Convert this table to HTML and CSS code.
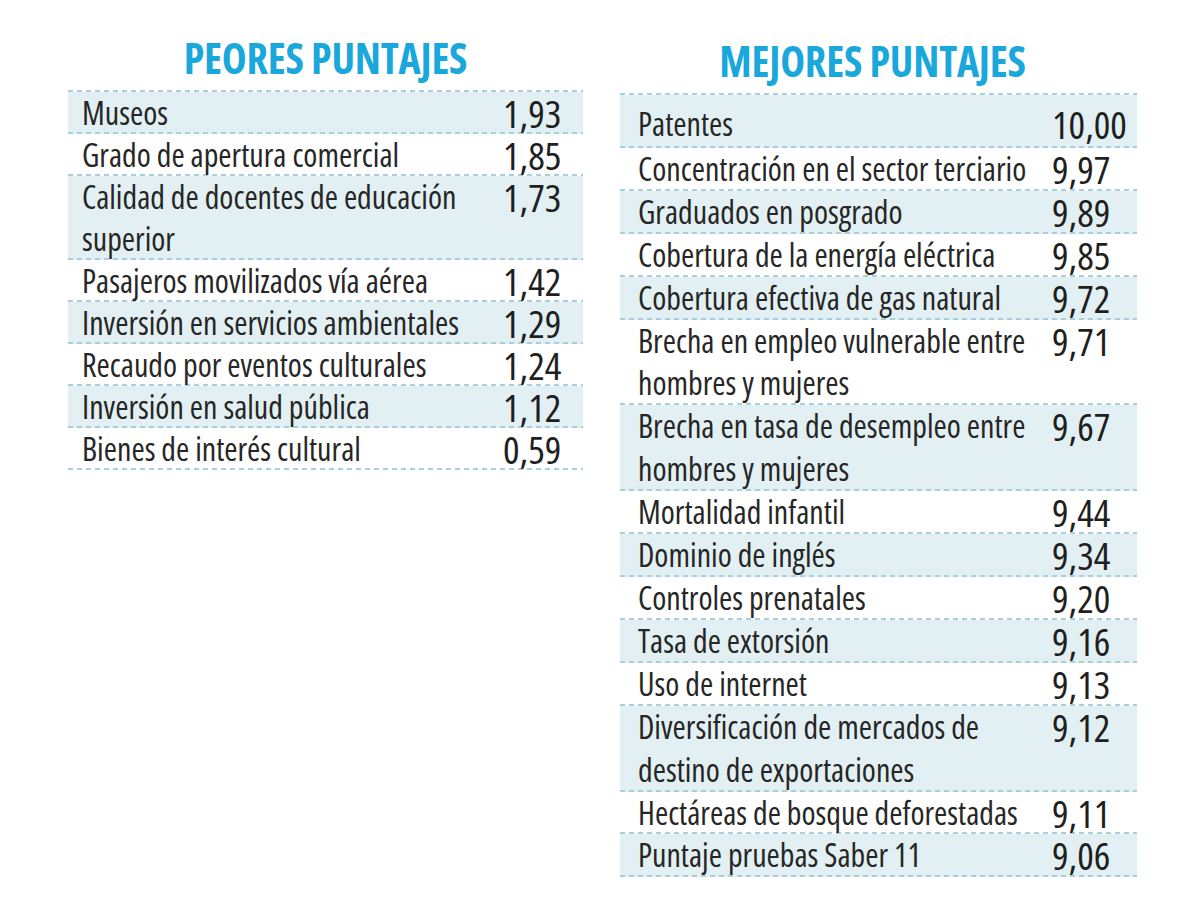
FILE: index.html
```html
<!DOCTYPE html>
<html lang="es">
<head>
<meta charset="utf-8">
<title>Peores y mejores puntajes</title>
<link rel="stylesheet" href="styles.css">
</head>
<body>
<main class="page">
  <section class="panel panel-left">
    <h2 class="title">PEORES PUNTAJES</h2>
    <div class="table">
      <div class="row"><span class="label">Museos</span><span class="num">1,93</span></div>
      <div class="row"><span class="label">Grado de apertura comercial</span><span class="num">1,85</span></div>
      <div class="row"><span class="label">Calidad de docentes de educación superior</span><span class="num">1,73</span></div>
      <div class="row"><span class="label">Pasajeros movilizados vía aérea</span><span class="num">1,42</span></div>
      <div class="row"><span class="label">Inversión en servicios ambientales</span><span class="num">1,29</span></div>
      <div class="row"><span class="label">Recaudo por eventos culturales</span><span class="num">1,24</span></div>
      <div class="row"><span class="label">Inversión en salud pública</span><span class="num">1,12</span></div>
      <div class="row"><span class="label">Bienes de interés cultural</span><span class="num">0,59</span></div>
    </div>
  </section>
  <section class="panel panel-right">
    <h2 class="title">MEJORES PUNTAJES</h2>
    <div class="table">
      <div class="row row-first"><span class="label">Patentes</span><span class="num">10,00</span></div>
      <div class="row"><span class="label">Concentración en el sector terciario</span><span class="num">9,97</span></div>
      <div class="row"><span class="label">Graduados en posgrado</span><span class="num">9,89</span></div>
      <div class="row"><span class="label">Cobertura de la energía eléctrica</span><span class="num">9,85</span></div>
      <div class="row"><span class="label">Cobertura efectiva de gas natural</span><span class="num">9,72</span></div>
      <div class="row"><span class="label">Brecha en empleo vulnerable entre hombres y mujeres</span><span class="num">9,71</span></div>
      <div class="row"><span class="label">Brecha en tasa de desempleo entre hombres y mujeres</span><span class="num">9,67</span></div>
      <div class="row"><span class="label">Mortalidad infantil</span><span class="num">9,44</span></div>
      <div class="row"><span class="label">Dominio de inglés</span><span class="num">9,34</span></div>
      <div class="row"><span class="label">Controles prenatales</span><span class="num">9,20</span></div>
      <div class="row"><span class="label">Tasa de extorsión</span><span class="num">9,16</span></div>
      <div class="row"><span class="label">Uso de internet</span><span class="num">9,13</span></div>
      <div class="row"><span class="label">Diversificación de mercados de destino de exportaciones</span><span class="num">9,12</span></div>
      <div class="row"><span class="label">Hectáreas de bosque deforestadas</span><span class="num">9,11</span></div>
      <div class="row"><span class="label">Puntaje pruebas Saber 11</span><span class="num">9,06</span></div>
    </div>
  </section>
</main>
</body>
</html>
```
FILE: styles.css
```css
html, body {
  margin: 0;
  padding: 0;
  background: #ffffff;
}

body {
  font-family: "Open Sans", "Liberation Sans", sans-serif;
  font-stretch: 75%;
  color: #262626;
}

.page {
  display: flex;
  align-items: flex-start;
  gap: 37px;
  padding: 33px 0 0 68px;
}

.panel-left {
  width: 515px;
}

.panel-right {
  width: 517px;
}

.title {
  margin: 0 0 7px;
  text-align: center;
  font-size: 42px;
  line-height: 50px;
  font-weight: 700;
  letter-spacing: -0.2px;
  color: #1aa7dc;
}

.panel-right .title {
  margin: 3px 0 7px;
  padding-right: 12px;
}

.table {
  padding-top: 2px;
  background-image: repeating-linear-gradient(90deg, #a9cfdc 0 5px, transparent 5px 9px);
  background-size: 100% 2px;
  background-repeat: no-repeat;
  background-position: 0 0;
}

.row {
  display: grid;
  grid-template-columns: 1fr 80px;
  column-gap: 8px;
  padding-left: 14px;
  line-height: 42px;
  background-image: repeating-linear-gradient(90deg, #a9cfdc 0 5px, transparent 5px 9px);
  background-size: 100% 2px;
  background-repeat: no-repeat;
  background-position: 0 100%;
}

.row:nth-child(odd) {
  background-color: #e2f0f3;
}

.panel-right .row {
  padding-left: 18px;
  grid-template-columns: 1fr 85px;
  line-height: 42.9px;
}

.panel-right .row-first {
  padding-top: 8px;
  padding-bottom: 2px;
}

.label {
  font-size: 32px;
  font-weight: 370;
}

.num {
  font-size: 39px;
  font-weight: 400;
  color: #1f1f1f;
}
```
